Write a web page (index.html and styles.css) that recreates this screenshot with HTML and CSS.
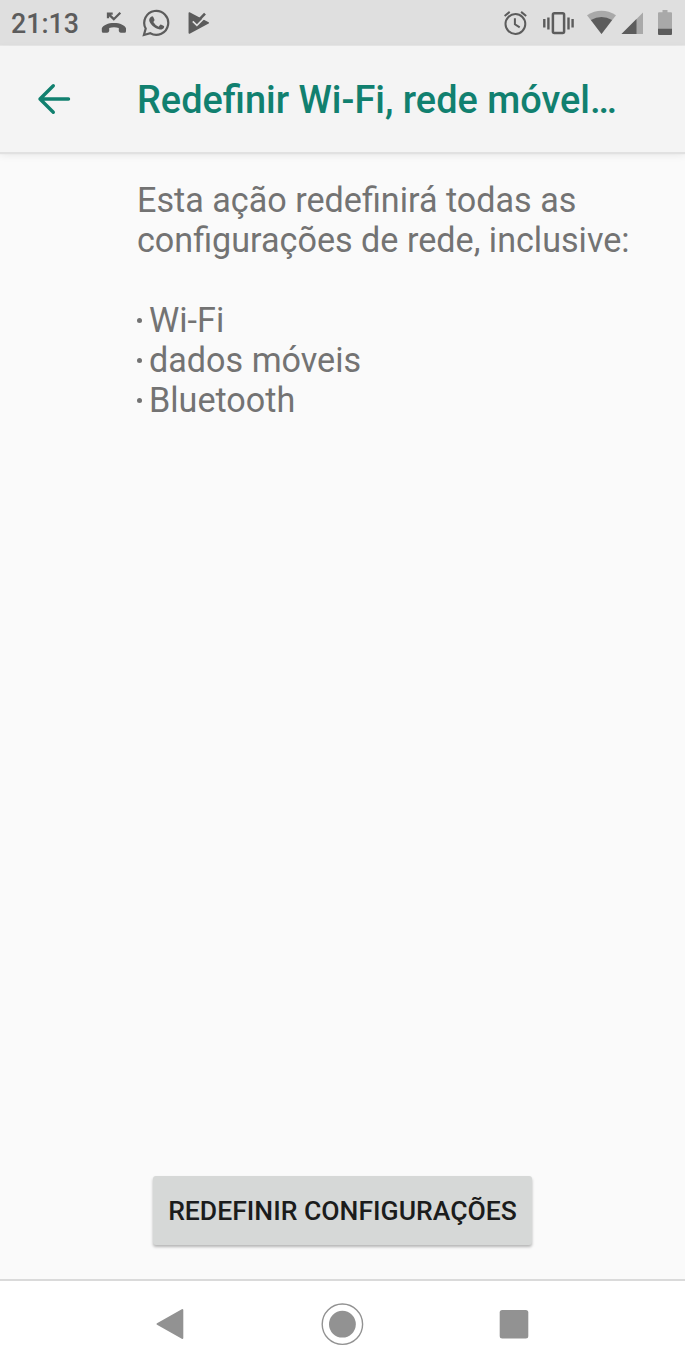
FILE: index.html
```
<!DOCTYPE html>
<html lang="pt-BR">
<head>
    <meta charset="UTF-8">
    <meta name="viewport" content="width=device-width, initial-scale=1.0">
    <title>Redefinir Wi-Fi, rede móvel e Bluetooth</title>
    <link rel="stylesheet" href="styles.css">
</head>
<body>
    <div class="status-bar">
        <span class="clock">21:13</span>
        <div class="notifications">
            <!-- missed call -->
            <svg width="26" height="45" viewBox="0 0 26 45">
                <path fill="none" stroke="#5c5c5c" stroke-width="2.300" d="M7 18.200V13.600H11.700M7 13.600L12.800 19.200L19.300 12.800"/>
                <path fill="#5c5c5c" d="M13 23C19 23 23.500 25 25 28.200V31.200Q25 32.700 23.500 32.700H19.800Q18.200 32.500 17.800 31V28Q13 26.600 8.200 28V31Q7.800 32.500 6.200 32.700H2.200Q.8 32.700.8 31.200V28.200C2.500 25 7 23 13 23Z"/>
            </svg>
            <!-- whatsapp -->
            <svg width="28" height="45" viewBox="0 0 28 45">
                <path fill="none" stroke="#5c5c5c" stroke-width="2.200" d="M1.900 35L3.700 28.600A12 12 0 1 1 8.300 33.300Z"/>
                <path fill="#5c5c5c" d="M9.200 16.700Q10.500 15.900 11.300 17L12.500 19.700Q12.700 20.400 11.300 22Q13.200 25.400 16.600 26.700L18.200 24.800Q18.700 24.300 19.400 24.700L21.900 26Q22.400 26.300 22 27.400C21.200 29.300 19 29.800 17 29.300C12.200 28 8.400 24.300 7.300 21C6.900 19.200 7.800 17.400 9.200 16.700Z"/>
            </svg>
            <!-- play store check -->
            <svg width="22" height="45" viewBox="0 0 22 45">
                <path fill="#5c5c5c" stroke="#5c5c5c" stroke-width="1.500" stroke-linejoin="round" d="M1.300 13L20.300 22.800L1.300 33Z"/>
                <path fill="#dfdfdf" d="M9.900 16L14.600 11L19 15L17 17.500Z"/>
                <path fill="none" stroke="#dfdfdf" stroke-width="1.800" d="M4.800 21.300L8.900 25.300L17.600 16.600"/>
                <path fill="none" stroke="#5c5c5c" stroke-width="2.600" d="M5.800 18.900L9 22L17 13.600"/>
            </svg>
        </div>
        <div class="indicators">
            <svg class="alarm" width="24" height="45" viewBox="0 0 24 45">
                <g fill="none" stroke="#5c5c5c" stroke-width="2">
                    <circle cx="11.400" cy="24" r="9.900"/>
                    <path d="M.6 16L5.700 11.900M22.200 16L17.100 11.900M10.900 18.300V24.300L15.700 27.300"/>
                </g>
            </svg>
            <svg class="vibrate" width="32" height="45" viewBox="0 0 32 45">
                <rect x="9.900" y="13.300" width="11.200" height="19.800" rx="1.500" fill="none" stroke="#5c5c5c" stroke-width="2.500"/>
                <path stroke="#5c5c5c" stroke-width="2.400" d="M1.300 19V27.500M5.400 17.500V29.500M25.500 17.500V29.500M29.600 19V27.500"/>
            </svg>
            <svg class="wifi" width="30" height="45" viewBox="0 0 30 45">
                <path fill="#a9a9a9" d="M0 15.200Q14.500 6.300 29 15.200L14.500 34Z"/>
                <path fill="#5c5c5c" d="M3.900 20Q14.500 13.800 25.100 20L14.500 34Z"/>
            </svg>
            <svg class="signal" width="22" height="45" viewBox="0 0 22 45">
                <path fill="#a9a9a9" d="M.5 34L22 12.500V34Z"/>
                <path fill="#5c5c5c" d="M.5 34L15.500 19V34Z"/>
            </svg>
            <svg class="battery" width="14" height="45" viewBox="0 0 14 45">
                <path fill="#a9a9a9" d="M4.500 10H9.500V12.300H13Q14 12.300 14 13.300V29H0V13.300Q0 12.300 1 12.300H4.500Z"/>
                <path fill="#5c5c5c" d="M0 28.700H14V34Q14 35 13 35H1Q0 35 0 34Z"/>
            </svg>
        </div>
    </div>

    <header class="toolbar">
        <svg class="back" width="34" height="32" viewBox="0 0 34 32">
            <path fill="none" stroke="#11806f" stroke-width="3.400" stroke-linecap="round" stroke-linejoin="round" d="M16.300 2.800L3 16L16.300 29.200M3 16H31.500"/>
        </svg>
        <h1>Redefinir Wi-Fi, rede móvel…</h1>
    </header>

    <main class="content">
        <p>Esta ação redefinirá todas as configurações de rede, inclusive:</p>
        <ul>
            <li>Wi-Fi</li>
            <li>dados móveis</li>
            <li>Bluetooth</li>
        </ul>
        <button class="reset-button">REDEFINIR CONFIGURAÇÕES</button>
    </main>

    <nav class="nav-bar">
        <svg width="30" height="44" viewBox="0 0 30 44">
            <path fill="#929292" stroke="#929292" stroke-width="2" stroke-linejoin="round" d="M2.500 22L27.300 8V36Z"/>
        </svg>
        <svg width="44" height="44" viewBox="0 0 44 44">
            <circle cx="22.400" cy="22.200" r="20.200" fill="none" stroke="#929292" stroke-width="1.400"/>
            <circle cx="22.400" cy="22.200" r="13.400" fill="#929292"/>
        </svg>
        <svg width="30" height="44" viewBox="0 0 30 44">
            <rect x=".7" y="8" width="28.600" height="28.600" rx="2.500" fill="#929292"/>
        </svg>
    </nav>
</body>
</html>
```
FILE: styles.css
```
* {
    box-sizing: border-box;
}
body {
    margin: 0;
    height: 1370px;
    display: flex;
    flex-direction: column;
    font-family: Roboto, sans-serif;
    background-color: #fafafa;
    overflow: hidden;
}
svg {
    display: block;
    flex: none;
}
.status-bar {
    display: flex;
    flex: none;
    height: 46px;
    padding: 0 13px 0 11px;
    background-color: #dfdfdf;
    border-bottom: 1px solid #e9e9e9;
}
.clock {
    width: 89.5px;
    font-size: 26.8px;
    font-weight: 500;
    line-height: 49px;
    color: #5c5c5c;
}
.notifications {
    display: flex;
    gap: 15px;
}
.notifications svg:last-child {
    margin-left: 3px;
}
.indicators {
    display: flex;
    margin-left: auto;
}
.vibrate {
    margin-left: 15px;
}
.wifi {
    margin-left: 12px;
}
.signal {
    margin-left: 4px;
    margin-right: 1px;
}
.battery {
    margin-left: 14px;
}
.toolbar {
    display: flex;
    flex: none;
    align-items: center;
    height: 106px;
    padding-left: 37px;
    background-color: #f4f4f4;
    box-shadow: 0 1px 1px 1px #e1e1e1, 0 3px 8px rgba(0, 0, 0, 0.08);
}
.toolbar h1 {
    margin: 2px 0 0 66px;
    font-size: 37.9px;
    font-weight: 500;
    line-height: 46px;
    white-space: nowrap;
    color: #11806f;
}
.content {
    display: flex;
    flex: 1;
    flex-direction: column;
    padding: 28px 40px 34px 137px;
    font-size: 34.15px;
    line-height: 40px;
    color: #737373;
}
.content p {
    margin: 0 0 40px;
}
.content ul {
    margin: 0;
    padding: 0;
    list-style: none;
}
.content li {
    display: flex;
    align-items: center;
}
.content li::before {
    content: "";
    width: 5px;
    height: 5px;
    margin-right: 7px;
    border-radius: 50%;
    background-color: #737373;
}
.reset-button {
    width: 379px;
    height: 69px;
    margin: auto 0 0 16px;
    padding: 0;
    border: none;
    border-radius: 3px;
    background-color: #d6d8d7;
    box-shadow: 0 2px 3px rgba(0, 0, 0, 0.28);
    font-family: inherit;
    font-size: 26.55px;
    font-weight: 500;
    white-space: nowrap;
    color: #1b1c1c;
}
.nav-bar {
    display: flex;
    flex: none;
    justify-content: center;
    align-items: center;
    gap: 135px;
    height: 91px;
    padding: 0 1px 3px 0;
    border-top: 2px solid #dadada;
    background-color: #fff;
}
```
